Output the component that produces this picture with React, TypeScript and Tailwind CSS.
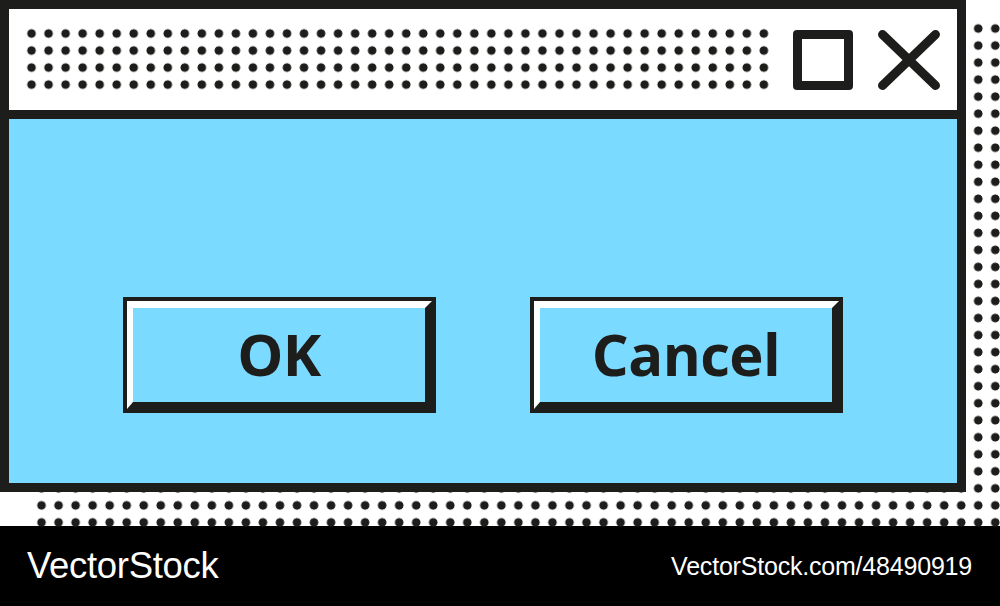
import React from "react";

const INK = "#1d1d1b";

function DialogButton({ label }: { label: string }) {
  return (
    <button className="w-[313px] h-[116px] border-4 border-[#1d1d1b] bg-[#7bdaff] p-0">
      <div className="h-full w-full border-t-[7px] border-l-[6px] border-t-white border-l-white border-r-[7px] border-b-[7px] border-r-[#1d1d1b] border-b-[#1d1d1b] flex items-center justify-center">
        <span className="font-['Open_Sans',sans-serif] font-bold text-[58px] leading-none tracking-[-0.6px] text-[#1d1d1b] pb-[2px]">
          {label}
        </span>
      </div>
    </button>
  );
}

function CloseIcon() {
  return (
    <svg width="62" height="60" viewBox="0 0 62 60" fill="none">
      <path
        d="M4.5 4.5L57.5 55.5M57.5 4.5L4.5 55.5"
        stroke={INK}
        strokeWidth="9"
        strokeLinecap="round"
      />
    </svg>
  );
}

export default function App() {
  return (
    <div className="w-[1000px] h-[606px] bg-white flex flex-col overflow-hidden">
      <div className="relative h-[526px] flex-shrink-0">
        {/* halftone drop shadow behind the window */}
        <div className="absolute left-[32.5px] top-[19.5px] w-[972px] h-[511px] bg-[radial-gradient(circle,#1d1d1b_4px,transparent_4.6px)] bg-size-[17.04px_17.04px]" />

        <div className="relative z-10 w-[966px] h-[492px] border-[9px] border-[#1d1d1b] flex flex-col">
          {/* Title bar */}
          <div className="h-[110px] flex-shrink-0 bg-white border-b-[9px] border-[#1d1d1b] flex items-center pl-[13.5px] pr-[17px]">
            <div className="w-[749.8px] h-[68.2px] bg-[radial-gradient(circle,#1d1d1b_4px,transparent_4.6px)] bg-size-[17.04px_17.04px]" />
            <div className="flex-1" />
            <div className="w-[60px] h-[60px] border-[9px] border-[#1d1d1b] rounded-[4px]" />
            <div className="ml-[25px]">
              <CloseIcon />
            </div>
          </div>

          {/* Body */}
          <div className="flex-1 bg-[#7bdaff] flex items-end justify-center gap-[94px] pb-[70px]">
            <DialogButton label="OK" />
            <DialogButton label="Cancel" />
          </div>
        </div>
      </div>

      {/* Footer */}
      <div className="flex-1 bg-black flex items-center justify-between pl-[27px] pr-[28px] font-['Liberation_Sans',Arial,sans-serif] text-white">
        <span className="text-[36.5px] leading-none tracking-[-0.3px]">VectorStock</span>
        <span className="text-[25px] leading-none tracking-[-0.2px]">
          VectorStock.com/48490919
        </span>
      </div>
    </div>
  );
}
